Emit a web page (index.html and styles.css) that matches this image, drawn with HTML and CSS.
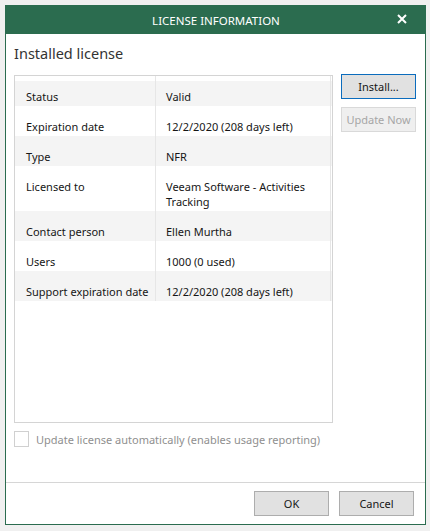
FILE: index.html
```html
<!DOCTYPE html>
<html>
<head>
<meta charset="utf-8">
<link rel="stylesheet" href="styles.css">
</head>
<body>
<div class="window">
  <div class="titlebar">
    <span class="title">LICENSE INFORMATION</span>
    <svg class="close" width="10" height="10" viewBox="0 0 10 10"><path d="M1 1 L9 9 M9 1 L1 9" stroke="#fff" stroke-width="2" fill="none"/></svg>
  </div>
  <div class="content">
    <div class="heading">Installed license</div>
    <div class="main">
      <div class="panel">
        <div class="row spacer"><div class="cell"></div><div class="cell"></div></div>
        <div class="row first alt"><div class="cell">Status</div><div class="cell">Valid</div></div>
        <div class="row"><div class="cell">Expiration date</div><div class="cell">12/2/2020 (208 days left)</div></div>
        <div class="row alt"><div class="cell">Type</div><div class="cell">NFR</div></div>
        <div class="row"><div class="cell">Licensed to</div><div class="cell">Veeam Software - Activities Tracking</div></div>
        <div class="row alt"><div class="cell">Contact person</div><div class="cell">Ellen Murtha</div></div>
        <div class="row"><div class="cell">Users</div><div class="cell">1000 (0 used)</div></div>
        <div class="row alt"><div class="cell">Support expiration date</div><div class="cell">12/2/2020 (208 days left)</div></div>
      </div>
      <div class="side">
        <button class="btn focused">Install...</button>
        <button class="btn disabled">Update Now</button>
      </div>
    </div>
    <label class="check"><span class="box"></span><span class="check-text">Update license automatically (enables usage reporting)</span></label>
  </div>
  <div class="footer">
    <button class="btn">OK</button>
    <button class="btn">Cancel</button>
  </div>
</div>
</body>
</html>
```
FILE: styles.css
```css
* { box-sizing: border-box; }
html, body { margin: 0; padding: 0; }
body {
  background: #f0f0f0;
  padding: 5px;
  font-family: "Noto Sans", "Open Sans", sans-serif;
  font-size: 11px;
  color: #161616;
}
.window {
  width: 421px;
  height: 520px;
  border: 1px solid #2b6c4f;
  background: #fff;
  display: flex;
  flex-direction: column;
}
.titlebar {
  height: 28px;
  flex: none;
  background: #2b6c4f;
  color: #fff;
  display: flex;
  align-items: center;
  justify-content: center;
  position: relative;
}
.title { font-size: 11.5px; padding-left: 1px; }
.close { position: absolute; left: 391px; top: 8px; }
.content {
  flex: 1;
  padding: 0 8px;
  display: flex;
  flex-direction: column;
}
.heading {
  margin-top: 9px;
  height: 20px;
  line-height: 20px;
  font-size: 14.5px;
  color: #333;
}
.main {
  margin-top: 12px;
  display: flex;
  gap: 8px;
  align-items: flex-start;
}
.panel {
  width: 319px;
  height: 348px;
  border: 1px solid #d4d4d4;
}
.row {
  display: grid;
  grid-template-columns: 141px 175px;
  background: #fff;
}
.row.alt { background: #f4f4f4; }
.cell {
  border-right: 1px solid #e6e6e6;
  padding: 13px 4px 2px 11px;
  line-height: 15px;
}
.cell + .cell { padding-left: 10px; }
.row.spacer .cell { height: 5px; padding: 0; }
.row.first .cell { padding-top: 8px; }
.side {
  margin-top: -1px;
  display: flex;
  flex-direction: column;
  gap: 8px;
}
.btn {
  width: 75px;
  height: 25px;
  font-family: inherit;
  font-size: 11px;
  color: #161616;
  background: #e1e1e1;
  border: 1px solid #adadad;
  padding: 0;
  margin: 0;
}
.btn.focused { border-color: #0b6cbd; }
.btn.disabled { background: #efefef; border-color: #d9d9d9; color: #a6a6a6; }
.check {
  margin-top: 8px;
  display: flex;
  align-items: center;
  gap: 7px;
  height: 16px;
  color: #8f8f8f;
}
.box {
  width: 15px;
  height: 16px;
  border: 1px solid #d0d0d0;
  background: #fff;
}
.footer {
  height: 42px;
  flex: none;
  border-top: 1px solid #d6d6d6;
  display: flex;
  justify-content: flex-end;
  align-items: center;
  gap: 10px;
  padding-right: 11px;
}
```
